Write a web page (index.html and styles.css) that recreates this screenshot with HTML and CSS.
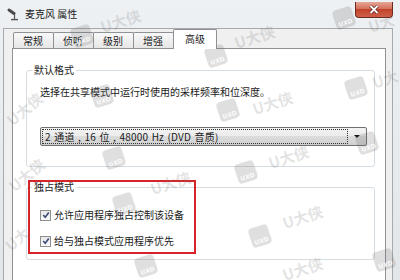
FILE: index.html
```html
<!DOCTYPE html>
<html lang="zh-CN">

<head>
    <meta charset="UTF-8">
    <title>麦克风 属性</title>
    <link rel="stylesheet" href="styles.css">
</head>

<body>
    <div class="window">
        <div class="titlebar">
            <svg class="app-icon" viewBox="0 0 14 14">
                <path d="M2 3 L7 6.5" stroke="#4a4a4a" stroke-width="3" stroke-linecap="round" fill="none" />
                <path d="M7.5 6.5 V12" stroke="#555" stroke-width="1.2" fill="none" />
                <path d="M4 12.6 H11" stroke="#555" stroke-width="1.4" fill="none" />
            </svg>
            <span class="title">麦克风 属性</span>
            <div class="close">
                <svg viewBox="0 0 10 9" width="10" height="9">
                    <path d="M1.5 1 L8.5 8 M8.5 1 L1.5 8" stroke="#5a231a" stroke-width="3.2" />
                    <path d="M1.5 1 L8.5 8 M8.5 1 L1.5 8" stroke="#fff" stroke-width="1.8" />
                </svg>
            </div>
        </div>

        <div class="client">
            <div class="tabs">
                <div class="tab">常规</div>
                <div class="tab">侦听</div>
                <div class="tab">级别</div>
                <div class="tab">增强</div>
                <div class="tab active">高级</div>
            </div>

            <div class="panel">
                <fieldset class="group">
                    <legend>默认格式</legend>
                    <div class="group-body">
                        <p class="hint">选择在共享模式中运行时使用的采样频率和位深度。</p>
                        <div class="combo">
                            <span class="combo-value">2 通道 , 16 位 , 48000 Hz (DVD 音质)</span>
                            <span class="combo-arrow"></span>
                        </div>
                    </div>
                </fieldset>

                <fieldset class="group exclusive">
                    <legend>独占模式</legend>
                    <div class="group-body">
                        <label class="check">
                            <span class="box"><svg viewBox="0 0 8 8"><path d="M1.2 4 L3.2 6.2 L6.8 1.4" stroke="#3c4a78" stroke-width="1.6" fill="none" /></svg></span>
                            允许应用程序独占控制该设备
                        </label>
                        <label class="check">
                            <span class="box"><svg viewBox="0 0 8 8"><path d="M1.2 4 L3.2 6.2 L6.8 1.4" stroke="#3c4a78" stroke-width="1.6" fill="none" /></svg></span>
                            给与独占模式应用程序优先
                        </label>
                    </div>
                </fieldset>

                <div class="highlight"></div>
            </div>
        </div>
    </div>

    <!-- site watermark -->
    <div class="watermarks">
        <span class="wm-logo" style="left:72px;top:26px">UXD</span>
        <span class="wm-text" style="left:100px;top:12px">U大侠</span>
        <span class="wm-logo" style="left:334px;top:8px">UXD</span>
        <span class="wm-text" style="left:368px;top:14px">U大</span>
        <span class="wm-logo" style="left:206px;top:46px">UXD</span>
        <span class="wm-text" style="left:234px;top:28px">U大侠</span>
        <span class="wm-logo" style="left:346px;top:78px">UXD</span>
        <span class="wm-text" style="left:372px;top:70px">U大</span>
        <span class="wm-logo" style="left:92px;top:86px">UXD</span>
        <span class="wm-text steep" style="left:4px;top:100px">U大侠</span>
        <span class="wm-logo" style="left:218px;top:100px">UXD</span>
        <span class="wm-text" style="left:252px;top:94px">U大侠</span>
        <span class="wm-logo" style="left:104px;top:148px">UXD</span>
        <span class="wm-text steep" style="left:6px;top:166px">U大侠</span>
        <span class="wm-logo" style="left:236px;top:162px">UXD</span>
        <span class="wm-text" style="left:268px;top:148px">U大侠</span>
        <span class="wm-logo" style="left:357px;top:133px">UXD</span>
        <span class="wm-logo" style="left:114px;top:194px">UXD</span>
        <span class="wm-text" style="left:150px;top:174px">U大侠</span>
        <span class="wm-logo" style="left:250px;top:226px">UXD</span>
        <span class="wm-text" style="left:282px;top:208px">U大侠</span>
        <span class="wm-text steep" style="left:4px;top:230px">U大</span>
        <span class="wm-logo" style="left:136px;top:256px">UXD</span>
        <span class="wm-text" style="left:282px;top:260px">U大侠</span>
        <span class="wm-logo" style="left:374px;top:250px">UXD</span>
    </div>
</body>

</html>
```

FILE: styles.css
```css
body {
    margin: 0;
    width: 400px;
    height: 280px;
    overflow: hidden;
    position: relative;
    font-family: "Noto Sans CJK SC", "Microsoft YaHei", sans-serif;
    font-size: 10px;
    color: #1a1a1a;
    background-color: #e4e7ea;
}

.window {
    width: 400px;
    height: 280px;
    overflow: hidden;
    background: linear-gradient(#eef1f4, #e3e6e9);
}

.titlebar {
    height: 28px;
    display: flex;
    align-items: center;
    padding-left: 7px;
}

.app-icon {
    width: 14px;
    height: 14px;
    margin-right: 4px;
}

.title {
    line-height: 14px;
}

.close {
    margin-left: auto;
    margin-right: 7px;
    align-self: flex-start;
    margin-top: 2px;
    width: 36px;
    height: 15px;
    border: 1px solid #6b2a20;
    border-top: none;
    border-radius: 0 0 4px 4px;
    background: linear-gradient(#e7a797, #d5705a 45%, #c2432b 50%, #d0604a);
    display: flex;
    align-items: center;
    justify-content: center;
}

.client {
    margin: 0 7px 0 3px;
    height: 252px;
    overflow: hidden;
    border: 1px solid #a6aaae;
    border-bottom: none;
    background-color: #f0f0f0;
}

.tabs {
    display: flex;
    align-items: flex-end;
    height: 19px;
    padding-left: 9px;
}

.tab {
    height: 15px;
    line-height: 15px;
    padding: 0 10px 0 9px;
    margin-right: -1px;
    border: 1px solid #8e9196;
    border-bottom: none;
    border-radius: 2px 2px 0 0;
    background: linear-gradient(#f8f8f8, #e6e6e6);
}

.tab.active {
    height: 19px;
    line-height: 17px;
    padding: 0 11px;
    margin-bottom: -1px;
    position: relative;
    z-index: 1;
    background: #fff;
}

.panel {
    position: relative;
    margin: 0 6px 0 8px;
    height: 220px;
    padding: 14px 10px 0 13px;
    border: 1px solid #8e9196;
    border-bottom: none;
    background-color: #fff;
}

.group {
    margin: 0;
    min-width: 0;
    padding: 0 7px 20px 5px;
    border: 1px solid #d6dde2;
    border-radius: 3px;
}

.group legend {
    padding: 0 2px;
    line-height: 14px;
}

.group-body {
    padding-left: 8px;
}

.hint {
    margin: 8px 0 0;
    line-height: 14px;
}

.combo {
    margin-top: 28px;
    height: 17px;
    display: flex;
    align-items: center;
    border: 1px solid #707070;
    border-radius: 2px;
    background: linear-gradient(#f3f3f3, #ebebeb 50%, #dcdcdc 50%, #d0d0d0);
}

.combo-value {
    flex: 1;
    height: 13px;
    line-height: 13px;
    margin-left: 1px;
    padding-left: 2px;
    word-spacing: 1px;
    letter-spacing: 0.2px;
    border: 1px dotted #333;
}

.combo-arrow {
    width: 18px;
    height: 17px;
    position: relative;
}

.combo-arrow::after {
    content: "";
    position: absolute;
    left: 6px;
    top: 7px;
    border-left: 3px solid transparent;
    border-right: 3px solid transparent;
    border-top: 3px solid #111;
}

.exclusive {
    margin-top: 13px;
    padding-bottom: 11px;
}

.check {
    display: flex;
    align-items: center;
    line-height: 14px;
    margin-top: 12px;
}

.check:first-child {
    margin-top: 14px;
}

.box {
    width: 9px;
    height: 9px;
    margin-right: 3px;
    border: 1px solid #8f8f8f;
    background: linear-gradient(#e8e8e8, #fafafa);
    display: flex;
    align-items: center;
    justify-content: center;
}

.box svg {
    width: 8px;
    height: 8px;
}

.highlight {
    position: absolute;
    left: 15px;
    top: 131px;
    width: 168px;
    height: 74px;
    box-sizing: border-box;
    border: 2px solid #d6252a;
}

.watermarks {
    position: absolute;
    inset: 0;
    overflow: hidden;
    pointer-events: none;
}

.wm-logo,
.wm-text {
    position: absolute;
    transform: rotate(-18deg);
}

.wm-logo {
    width: 20px;
    height: 20px;
    border-radius: 4px;
    background: rgba(110, 110, 110, 0.22);
    color: rgba(255, 255, 255, 0.9);
    font-family: "DejaVu Sans", sans-serif;
    font-size: 6px;
    font-weight: bold;
    line-height: 6px;
    text-align: center;
    display: flex;
    align-items: flex-end;
    justify-content: center;
    padding-bottom: 2px;
    box-sizing: border-box;
}

.wm-text {
    font-size: 15px;
    font-weight: bold;
    line-height: 18px;
    color: rgba(110, 110, 110, 0.2);
}

.wm-text.steep {
    transform: rotate(-40deg);
}
```
